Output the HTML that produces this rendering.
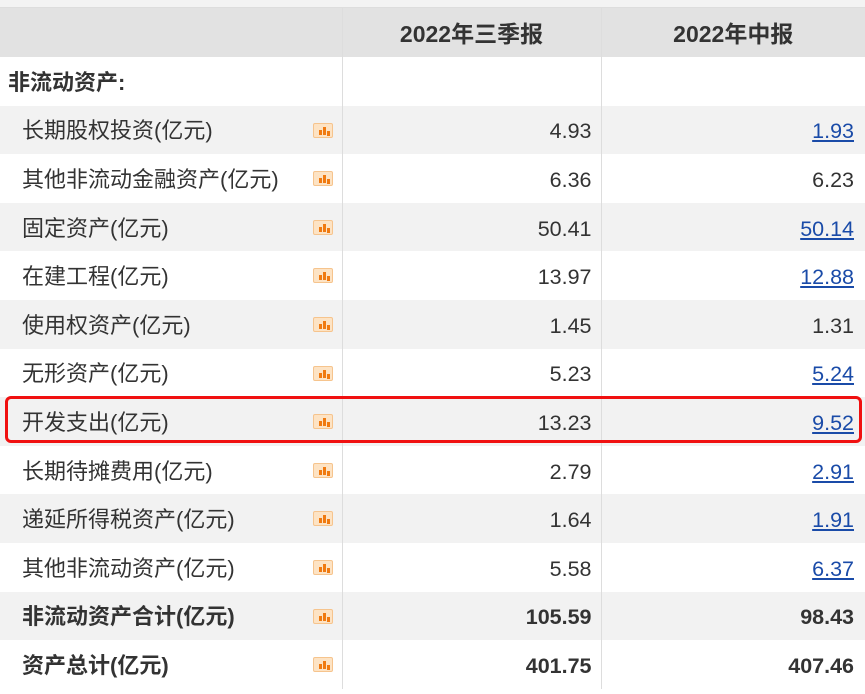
<!DOCTYPE html><html><head><meta charset="utf-8"><style>
body{margin:0;width:865px;height:694px;overflow:hidden;background:#fff;font-family:"Liberation Sans","Noto Sans CJK SC",sans-serif;color:#333;position:relative}
.top{position:absolute;left:0;top:0;width:865px;height:8px;background:#f3f3f3;border-bottom:1px solid #ddd;box-sizing:border-box}
table{position:absolute;top:8px;left:0;border-collapse:collapse;width:865px}
td{height:48.6px;padding:3px 0 0 0;font-size:21.5px;line-height:22px;box-sizing:border-box;border-right:1px solid #ddd;vertical-align:middle}
tr.h td{background:#e2e2e2;height:49px;text-align:center;font-weight:bold;font-size:23px;padding-top:2px}
tr:nth-child(odd):not(.h) td{background:#f2f2f2}
td.a{width:342px;padding-left:22px;position:relative;font-size:22px}
td.b{width:259px;text-align:right;padding-right:9px}
td.c{text-align:right;padding-right:11px;border-right:none}
a{color:#1a4ba8;text-decoration:underline}
.i{position:absolute;left:313px;top:17px;width:20px;height:15px;background:#fde3c4;border:1px solid #f6c48d;box-sizing:border-box;border-radius:2px}
.i:before{content:"";position:absolute;left:5px;bottom:2px;width:3px;height:5px;background:#f07a10;box-shadow:8px 1px 0 0 #f07a10}
.i:after{content:"";position:absolute;left:9px;bottom:2px;width:3px;height:8px;background:#f07a10}
.s{position:absolute;left:5px;top:396px;width:857px;height:47px;border:3px solid #f01010;border-radius:6px;box-sizing:border-box}
</style></head><body>
<div class="top"></div>
<table>
<tr class="h"><td class="a" style="font-size:23px"></td><td class="b" style="text-align:center;padding:2px 0 0">2022年三季报</td><td class="c" style="text-align:center;padding:2px 0 0">2022年中报</td></tr>
<tr><td class="a" style="padding-left:8px;font-weight:bold">非流动资产:</td><td class="b"></td><td class="c"></td></tr>
<tr><td class="a">长期股权投资(亿元)<span class="i"></span></td><td class="b">4.93</td><td class="c"><a>1.93</a></td></tr>
<tr><td class="a">其他非流动金融资产(亿元)<span class="i"></span></td><td class="b">6.36</td><td class="c">6.23</td></tr>
<tr><td class="a">固定资产(亿元)<span class="i"></span></td><td class="b">50.41</td><td class="c"><a>50.14</a></td></tr>
<tr><td class="a">在建工程(亿元)<span class="i"></span></td><td class="b">13.97</td><td class="c"><a>12.88</a></td></tr>
<tr><td class="a">使用权资产(亿元)<span class="i"></span></td><td class="b">1.45</td><td class="c">1.31</td></tr>
<tr><td class="a">无形资产(亿元)<span class="i"></span></td><td class="b">5.23</td><td class="c"><a>5.24</a></td></tr>
<tr><td class="a">开发支出(亿元)<span class="i"></span></td><td class="b">13.23</td><td class="c"><a>9.52</a></td></tr>
<tr><td class="a">长期待摊费用(亿元)<span class="i"></span></td><td class="b">2.79</td><td class="c"><a>2.91</a></td></tr>
<tr><td class="a">递延所得税资产(亿元)<span class="i"></span></td><td class="b">1.64</td><td class="c"><a>1.91</a></td></tr>
<tr><td class="a">其他非流动资产(亿元)<span class="i"></span></td><td class="b">5.58</td><td class="c"><a>6.37</a></td></tr>
<tr style="font-weight:bold"><td class="a">非流动资产合计(亿元)<span class="i"></span></td><td class="b">105.59</td><td class="c">98.43</td></tr>
<tr style="font-weight:bold"><td class="a">资产总计(亿元)<span class="i"></span></td><td class="b">401.75</td><td class="c">407.46</td></tr>
</table>
<div class="s"></div>
</body></html>
